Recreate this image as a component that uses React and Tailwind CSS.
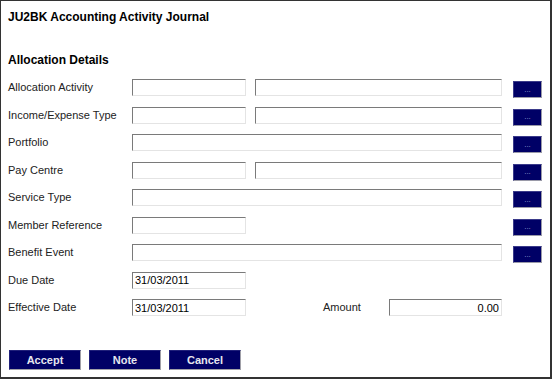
const rows = [
  { label: 'Allocation Activity', kind: 'split', lookup: true },
  { label: 'Income/Expense Type', kind: 'split', lookup: true },
  { label: 'Portfolio', kind: 'wide', lookup: true },
  { label: 'Pay Centre', kind: 'split', lookup: true },
  { label: 'Service Type', kind: 'wide', lookup: true },
  { label: 'Member Reference', kind: 'short', lookup: true },
  { label: 'Benefit Event', kind: 'wide', lookup: true },
  { label: 'Due Date', kind: 'short', value: '31/03/2011' },
  { label: 'Effective Date', kind: 'short', value: '31/03/2011', amount: '0.00' },
];

const inputCls =
  'h-[17px] bg-white border border-t-[#7a7a7a] border-l-[#7a7a7a] border-r-[#e4e4e4] border-b-[#e4e4e4] px-[2px] text-[11px] leading-[15px] text-black outline-none';

const Field = ({ width, value = '', right = false }) => (
  <input
    readOnly
    value={value}
    className={`${inputCls} ${width} ${right ? 'text-right' : ''}`}
  />
);

const LookupButton = () => (
  <button className="mt-[2px] w-[29px] h-[17px] bg-[#000066] border border-t-[#3a3a8a] border-l-[#3a3a8a] border-r-[#9a9aa8] border-b-[#9a9aa8] text-[#9a9ad0] text-[8px] leading-[8px] flex items-center justify-center">
    ...
  </button>
);

const ActionButton = ({ children }) => (
  <button className="w-[72px] h-[20px] bg-[#000066] border border-t-[#20207a] border-l-[#20207a] border-r-[#a0a0a8] border-b-[#a0a0a8] text-[#e6e6ee] text-[11px] font-bold leading-[18px]">
    {children}
  </button>
);

export default function App() {
  return (
    <div
      className="w-[552px] h-[379px] bg-white border-t border-l border-r-2 border-b-2 border-[#333333] flex flex-col pl-[7px] text-black"
      style={{ fontFamily: '"Liberation Sans", Arial, sans-serif' }}
    >
      <div className="mt-[9px] text-[12px] font-bold leading-[15px]">JU2BK Accounting Activity Journal</div>
      <div className="mt-[28px] text-[12px] font-bold leading-[15px]">Allocation Details</div>

      <div className="mt-[11px] flex flex-col">
        {rows.map((r) => (
          <div key={r.label} className="h-[27.5px] flex items-start">
            <div className="w-[124px] h-[17px] flex items-center text-[11px] text-[#222]">{r.label}</div>
            {r.kind === 'split' && (
              <>
                <Field width="w-[114px]" />
                <div className="w-[9px]" />
                <Field width="w-[247px]" />
              </>
            )}
            {r.kind === 'wide' && <Field width="w-[370px]" />}
            {r.kind === 'short' && <Field width="w-[114px]" value={r.value} />}
            {r.amount && (
              <>
                <div className="w-[143px] h-[17px] flex items-center pl-[77px] text-[11px] text-[#222]">
                  Amount
                </div>
                <Field width="w-[113px]" value={r.amount} right />
              </>
            )}
            {r.lookup && (
              <>
                <div className="flex-1" />
                <div className="mr-[8px]">
                  <LookupButton />
                </div>
              </>
            )}
          </div>
        ))}
      </div>

      <div className="mt-[23px] flex gap-[8px] pl-[1px]">
        <ActionButton>Accept</ActionButton>
        <ActionButton>Note</ActionButton>
        <ActionButton>Cancel</ActionButton>
      </div>
    </div>
  );
}
